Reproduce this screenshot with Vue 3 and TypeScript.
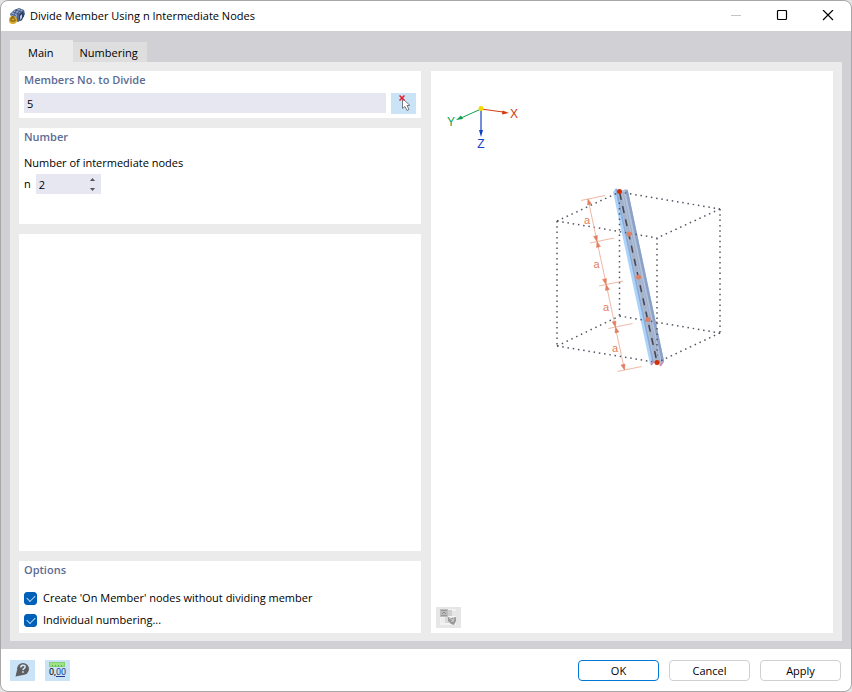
<script setup lang="ts">
import { ref } from 'vue'

interface Point { x: number; y: number }

const tabs = ['Main', 'Numbering']
const activeTab = ref('Main')
const members = ref('5')
const count = ref(2)
const onMember = ref(true)
const individual = ref(true)

const step = (delta: number) => {
  count.value = Math.max(1, count.value + delta)
}

// Division points of the member and the matching points of the dimension line
const nodes: Point[] = [
  { x: 198, y: 163 },
  { x: 207.5, y: 206 },
  { x: 217, y: 248.5 },
]
const marks: Point[] = [
  { x: 157, y: 128 },
  { x: 166, y: 170.5 },
  { x: 175, y: 213.5 },
  { x: 184.5, y: 256 },
  { x: 193.5, y: 299 },
]
const labels: Point[] = [
  { x: 156, y: 153 },
  { x: 165.5, y: 197 },
  { x: 175, y: 240 },
  { x: 184, y: 281 },
]
</script>

<template>
  <div class="window">
    <header class="titlebar">
      <svg class="app-icon" width="16" height="16" viewBox="0 0 16 16" aria-hidden="true">
        <path d="M1 6 5 2l5-2 5 2 1 4-3 6-4 2-6-3z" fill="#51678f" />
        <path d="M2 6 6 2l4-1 4 1-6 5-1 4-4-2z" fill="#91a9d2" />
        <path d="m4 4 6 2M6 2l6 2M5 7l3-6M8 7l4-6M2 6l5 2" stroke="#35496f" stroke-width=".8" fill="none" />
        <path d="m10 7 4-4 1 5-3 5-2-2z" fill="#293c61" />
        <path d="m11 8 2-2v4l-2 2z" fill="#b8cae7" />
        <circle cx="4" cy="12" r="4" fill="#d9aa27" />
        <path d="M2 13v-3h4M3 10V9q1-1 2 0M2 13h4v-2" stroke="#705818" fill="none" />
      </svg>
      <h1>Divide Member Using n Intermediate Nodes</h1>
      <div class="window-controls">
        <button type="button" aria-label="Minimize" disabled>
          <svg width="12" height="12" viewBox="0 0 12 12"><path d="M1 5.500h10" stroke="#c5c5c5" /></svg>
        </button>
        <button type="button" aria-label="Maximize">
          <svg width="12" height="12" viewBox="0 0 12 12"><rect x="1.500" y="0.500" width="9" height="9" rx="1" fill="none" stroke="#000" stroke-width="1.200" /></svg>
        </button>
        <button type="button" aria-label="Close">
          <svg width="12" height="12" viewBox="0 0 12 12"><path d="m1 0 10 10M11 0 1 10" stroke="#000" stroke-width="1.200" /></svg>
        </button>
      </div>
    </header>

    <main class="body">
      <div class="tabs" role="tablist">
        <button
          v-for="tab in tabs"
          :key="tab"
          type="button"
          role="tab"
          class="tab"
          :class="{ active: activeTab === tab }"
          :aria-selected="activeTab === tab"
          @click="activeTab = tab"
        >{{ tab }}</button>
      </div>

      <div class="page">
        <div class="column">
          <section class="card members">
            <h2><label for="members">Members No. to Divide</label></h2>
            <div class="member-row">
              <input id="members" v-model="members" class="field" type="text" />
              <button type="button" class="tool" aria-label="Select members">
                <svg width="25" height="21" viewBox="0 0 25 21">
                  <path d="M11.500 5.500v10l2.500-2 2 4 2-1-2-4h3z" fill="#fff" stroke="#777b82" />
                  <path d="m8.500 2.500 5 5M13.500 2.500l-5 5" stroke="#e0202b" stroke-width="1.500" />
                </svg>
              </button>
            </div>
          </section>

          <section class="card number">
            <h2>Number</h2>
            <p>Number of intermediate nodes</p>
            <div class="number-row">
              <label for="count">n</label>
              <div class="spinner">
                <input id="count" v-model.number="count" class="field" type="text" inputmode="numeric" />
                <div class="arrows">
                  <button type="button" aria-label="Increase" @click="step(1)">
                    <svg width="5" height="3" viewBox="0 0 5 3"><path d="M0 3 2.500 0 5 3z" fill="#555" /></svg>
                  </button>
                  <button type="button" aria-label="Decrease" @click="step(-1)">
                    <svg width="5" height="3" viewBox="0 0 5 3"><path d="m0 0 2.500 3L5 0z" fill="#555" /></svg>
                  </button>
                </div>
              </div>
            </div>
          </section>

          <section class="card spare"></section>

          <section class="card options">
            <h2>Options</h2>
            <label class="check">
              <input v-model="onMember" type="checkbox" />
              <span>Create 'On Member' nodes without dividing member</span>
            </label>
            <label class="check">
              <input v-model="individual" type="checkbox" />
              <span>Individual numbering...</span>
            </label>
          </section>
        </div>

        <section class="card preview">
          <svg class="drawing" viewBox="0 0 402 562" role="img" aria-label="Member divided into equal parts">
            <g class="axes">
              <path d="M50 38 72 41" stroke="#d03a10" />
              <path d="m78 42-7 1.500.5-4z" fill="#d03a10" />
              <path d="M50 38 30 47" stroke="#10a050" />
              <path d="m25 49 5-4.500 2 3.500z" fill="#10a050" />
              <path d="M50 38v22" stroke="#1540c8" stroke-width="1.200" />
              <path d="m50 66-2-7h4z" fill="#1540c8" />
              <circle cx="50" cy="37.500" r="2.500" fill="#f5d800" />
              <text x="83" y="47" fill="#d03a10">X</text>
              <text x="20" y="55" fill="#10a050">Y</text>
              <text x="50" y="77" fill="#1540c8">Z</text>
            </g>

            <g class="member">
              <path d="M182 121 185 117 189 120 226 291 219 293z" fill="#acd4fa" />
              <path d="m187 121 8-3 2 2 36 170-3 4-9-3z" fill="#b4c3da" />
              <path d="m185 118 37.500 174" stroke="#8aa9d6" stroke-width="1.500" fill="none" />
              <path d="m195.500 119 36.500 172" stroke="#8ba1c8" stroke-width="2.500" fill="none" />
              <path d="m192 121 37 171" stroke="#9aaccb" fill="none" />
            </g>

            <path class="box" d="M126 150 188.500 121" />
            <path class="box" d="m188.500 121 100.500 17" />
            <path class="box" d="m126 150 100 17" />
            <path class="box" d="m289 138-63 29" />
            <path class="box" d="m126 275 62.500-30" />
            <path class="box" d="m188.500 245 100.500 17" />
            <path class="box" d="m126 275 100 16.500" />
            <path class="box" d="m289 262-63 29.500" />
            <path class="box" d="M126 150v125M188.500 121v124M289 138v124M226 167v124" />

            <g class="member">
              <path d="m188.500 121 37.500 170" stroke="#a3b2cb" stroke-width="3.500" fill="none" />
              <path d="m188.500 121 37.500 170" stroke="#45434e" stroke-width="1.500" stroke-dasharray="7 6.500" stroke-dashoffset="-1" fill="none" />
              <path d="m220 294 3-4M229 295l3-4" stroke="#cb91ae" stroke-width="2" />
            </g>

            <g class="dimension">
              <path d="M157 128 193.500 299" />
              <path v-for="(m, i) in marks" :key="'t' + i" :d="`M${m.x - 7} ${m.y + 1.5}l24-5`" />
              <template v-for="(m, i) in marks" :key="'a' + i">
                <path v-if="i < marks.length - 1" class="head" :d="`M${m.x} ${m.y}l3.500 5-4 1z`" />
                <path v-if="i > 0" class="head" :d="`M${m.x} ${m.y}l-3.500-5 4-1z`" />
              </template>
              <text v-for="(l, i) in labels" :key="'l' + i" :x="l.x" :y="l.y">a</text>
            </g>

            <circle v-for="(n, i) in nodes" :key="'n' + i" :cx="n.x" :cy="n.y" r="2.500" fill="#e08060" />
            <circle cx="188.500" cy="120.500" r="2.500" fill="#d03008" />
            <circle cx="226" cy="291.500" r="2.500" fill="#d03008" />
          </svg>

          <button type="button" class="tool view" aria-label="Image view">
            <svg width="17" height="17" viewBox="0 0 17 17">
              <path d="M0 0h16v16H0z" fill="#f3f3f3" />
              <path d="M0 0h8v8H0z" fill="#bcbcbc" />
              <path d="M1 1.500h6M1 6.500h6" stroke="#999" />
              <path d="m2 5 2-2 2 2" stroke="#888" fill="none" />
              <path d="M8 1h4v6H8z" fill="#cfcfcf" />
              <path d="M12 2h4v5h-4z" fill="#e6e6e6" />
              <path d="M1 9h4v5H1z" fill="#ededed" />
              <path d="M5 8h4v6H5z" fill="#d9d9d9" />
              <path d="m8 8 3 1 5-1v4l-2 4-3-1-3-3z" fill="#999" />
              <path d="m9 9 4 2-2 2M14 9l-1 4" stroke="#ccc" fill="none" />
            </svg>
          </button>
        </section>
      </div>
    </main>

    <footer class="footer">
      <button type="button" class="tool" aria-label="Help">
        <svg width="25" height="21" viewBox="0 0 25 21">
          <circle cx="13" cy="9" r="6" fill="#5f5f61" />
          <path d="m7 10-1.500 6.500L13 15z" fill="#5f5f61" />
          <path d="M10.800 7.500q0-2.300 2.200-2.300t2.100 1.800q0 1-1.200 1.700-1 .6-1 1.400" stroke="#d7eafa" stroke-width="1.500" fill="none" />
          <path d="M12.100 11.300h1.700v1.500h-1.700z" fill="#d7eafa" />
        </svg>
      </button>
      <button type="button" class="tool" aria-label="Units and decimal places">
        <svg class="units" width="25" height="21" viewBox="0 0 25 21">
          <rect x="4.500" y="2.500" width="15" height="4" fill="#9be383" stroke="#84cf6e" />
          <path d="M7.500 5v1.500M10.500 5v1.500M13.500 5v1.500M16.500 5v1.500" stroke="#66aa57" />
          <text x="4" y="15">0,</text>
          <text x="11" y="15" fill="#203d8d">00</text>
          <path d="M11 16.500h9" stroke="#203d8d" />
        </svg>
      </button>
      <div class="actions">
        <button type="button" class="action primary">OK</button>
        <button type="button" class="action">Cancel</button>
        <button type="button" class="action">Apply</button>
      </div>
    </footer>
  </div>
</template>

<style>
body {
  margin: 0;
  background: #e4e4e4;
}
</style>

<style scoped>
* {
  box-sizing: border-box;
}

.window {
  display: flex;
  flex-direction: column;
  min-height: 100vh;
  border: 1px solid #a8a8a8;
  border-radius: 8px;
  overflow: hidden;
  background: #fff;
  color: #000;
  font: 11px/16px "Open Sans", "Noto Sans", sans-serif;
}

h1,
h2,
p {
  margin: 0;
  font: inherit;
}

button,
input {
  margin: 0;
  padding: 0;
  border: 0;
  border-radius: 0;
  background: none;
  color: inherit;
  font: inherit;
}

svg {
  display: block;
}

.titlebar {
  display: flex;
  align-items: center;
  height: 30px;
  padding-left: 8px;
  gap: 5px;
}

.titlebar h1 {
  flex: 1;
}

.window-controls {
  display: flex;
}

.window-controls button {
  display: grid;
  place-items: center;
  width: 46px;
  height: 30px;
}

.body {
  flex: 1;
  display: flex;
  flex-direction: column;
  padding: 9px 9px 8px;
  background: #d1d0d5;
}

.tabs {
  display: flex;
  align-items: flex-end;
}

.tab {
  height: 20px;
  padding: 2px 9px 0 7px;
  background: #dedede;
}

.tab.active {
  height: 22px;
  padding: 4px 19px 0 18px;
  background: #ebebeb;
}

.page {
  flex: 1;
  display: grid;
  grid-template-columns: 1fr 1fr;
  gap: 10px;
  padding: 9px 9px 8px;
  background: #ebebeb;
}

.column {
  display: flex;
  flex-direction: column;
  gap: 10px;
}

.card {
  background: #fff;
  padding: 1px 5px 4px;
}

h2 {
  color: #5c6b93;
  font-weight: 600;
}

.members h2 {
  margin-bottom: 5px;
}

.member-row {
  display: flex;
  gap: 5px;
}

.field {
  flex: 1;
  min-width: 0;
  height: 20px;
  padding: 0 3px;
  background: #e7e7f2;
}

.tool {
  display: grid;
  place-items: center;
  width: 25px;
  height: 21px;
  background: #cbe3f7;
}

.number {
  padding-bottom: 30px;
}

.number p {
  padding: 10px 0 3px;
}

.number-row {
  display: flex;
  align-items: center;
  gap: 5px;
}

.spinner {
  display: flex;
  width: 65px;
  background: #e7e7f2;
}

.arrows {
  display: flex;
  flex-direction: column;
  width: 17px;
}

.arrows button {
  display: grid;
  place-items: center;
  height: 10px;
}

.spare {
  flex: 1;
}

.options {
  padding-bottom: 2px;
}

.options h2 {
  margin-bottom: 9px;
}

.check {
  display: flex;
  align-items: center;
  gap: 6px;
  height: 22px;
}

.check input {
  appearance: none;
  display: grid;
  place-items: center;
  width: 13px;
  height: 13px;
  border: 1px solid #666;
  border-radius: 3px;
}

.check input:checked {
  border-color: #0060b8;
  background: #0060b8;
}

.check input:checked::after {
  content: "";
  width: 7px;
  height: 4px;
  margin-bottom: 2px;
  border: solid #b9d8f2;
  border-width: 0 0 1px 1px;
  transform: rotate(-45deg);
}

.preview {
  position: relative;
  display: flex;
  padding: 0;
}

.drawing {
  width: 100%;
  height: 100%;
  font-family: "Liberation Sans", Arial, sans-serif;
}

.axes text {
  font-size: 12px;
  text-anchor: middle;
}

.box {
  fill: none;
  stroke: #555463;
  stroke-width: 1.5;
  stroke-dasharray: 1.5 3.8;
}

.dimension path {
  fill: none;
  stroke: #f0b8a6;
}

.dimension .head {
  fill: #e08060;
  stroke: #e08060;
  stroke-width: 0.5;
}

.dimension text {
  fill: #e08060;
  font-size: 11px;
  text-anchor: middle;
}

.view {
  position: absolute;
  left: 5px;
  bottom: 5px;
  background: #e6e6e6;
}

.footer {
  display: flex;
  align-items: center;
  gap: 10px;
  height: 42px;
  padding: 0 10px 0 9px;
}

.units text {
  font: 9px Roboto, "Liberation Sans", sans-serif;
}

.actions {
  display: flex;
  gap: 10px;
  margin-left: auto;
}

.action {
  width: 81px;
  height: 21px;
  padding-top: 2px;
  border: 1px solid #d0d0d0;
  border-radius: 4px;
}

.action.primary {
  border-color: #0078d4;
}
</style>
